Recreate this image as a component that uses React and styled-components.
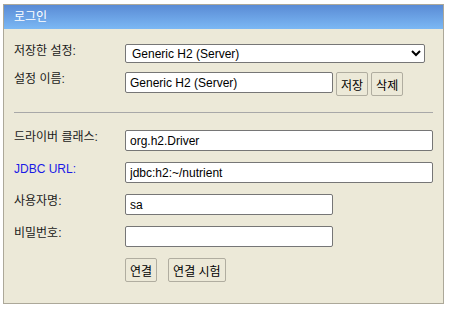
import React from "react";
import styled, { createGlobalStyle } from "styled-components";

const Global = createGlobalStyle`
  html, body { margin: 0; padding: 0; background: #fff; }
  body { font-family: "Liberation Sans", "Noto Sans CJK KR", sans-serif; font-size: 12px; }
`;

const Panel = styled.div`
  margin: 4px 0 0 3px;
  width: 439px;
  border: 1px solid #aca899;
  background: #ece9d8;
`;

const Header = styled.div`
  height: 24px;
  line-height: 24px;
  padding-left: 10px;
  background: linear-gradient(#5a8bd5, #7bb8f4);
  color: #fff;
  font-size: 12px;
`;

const Body = styled.div`
  box-sizing: border-box;
  height: 274px;
  padding: 15px 10px 0;
  display: flex;
  flex-direction: column;
`;

const Row = styled.div`
  display: flex;
  align-items: flex-start;
  margin-top: ${(p) => p.$gap || 0}px;
`;

const Label = styled.div`
  flex: none;
  width: 111px;
  font-size: 12px;
  line-height: 16px;
  margin-top: -1px;
  color: ${(p) => (p.$link ? "#1a1ae6" : "#1a1a1a")};
`;

const Controls = styled.div`
  display: flex;
  align-items: flex-start;
  gap: ${(p) => p.$gap || 3}px;
`;

const Select = styled.select`
  box-sizing: border-box;
  width: 300px;
  height: 19px;
  padding: 0 2px;
  border: 1px solid #767676;
  border-radius: 2px;
  background: #fff;
  color: #000;
  font: 12px "Liberation Sans", sans-serif;
`;

const TextInput = styled.input`
  box-sizing: border-box;
  width: ${(p) => p.$w}px;
  height: 21px;
  padding: 1px 4px;
  border: 1px solid #767676;
  border-radius: 2px;
  background: #fff;
  color: #000;
  font: 12px "Liberation Sans", sans-serif;
`;

const Button = styled.button`
  box-sizing: border-box;
  height: 24px;
  padding: 0 4px;
  border: 1px solid #b0ada0;
  border-radius: 2px;
  background: #ece9d8;
  color: #000;
  font: 12px "Liberation Sans", "Noto Sans CJK KR", sans-serif;
`;

const Separator = styled.hr`
  margin: 16px 0 0;
  border: 0;
  height: 1px;
  background: #a8a8a8;
`;

export default function App() {
  return (
    <>
      <Global />
      <Panel>
        <Header>로그인</Header>
        <Body>
          <Row>
            <Label>저장한 설정:</Label>
            <Select defaultValue="Generic H2 (Server)">
              <option>Generic H2 (Server)</option>
            </Select>
          </Row>
          <Row $gap={9}>
            <Label>설정 이름:</Label>
            <Controls>
              <TextInput $w={208} defaultValue="Generic H2 (Server)" />
              <Button>저장</Button>
              <Button>삭제</Button>
            </Controls>
          </Row>
          <Separator />
          <Row $gap={17}>
            <Label>드라이버 클래스:</Label>
            <TextInput $w={308} defaultValue="org.h2.Driver" />
          </Row>
          <Row $gap={11}>
            <Label $link>JDBC URL:</Label>
            <TextInput $w={308} defaultValue="jdbc:h2:~/nutrient" />
          </Row>
          <Row $gap={11}>
            <Label>사용자명:</Label>
            <TextInput $w={208} defaultValue="sa" />
          </Row>
          <Row $gap={11}>
            <Label>비밀번호:</Label>
            <TextInput $w={208} type="password" defaultValue="" />
          </Row>
          <Row $gap={11}>
            <Label />
            <Controls $gap={11}>
              <Button>연결</Button>
              <Button>연결 시험</Button>
            </Controls>
          </Row>
        </Body>
      </Panel>
    </>
  );
}
